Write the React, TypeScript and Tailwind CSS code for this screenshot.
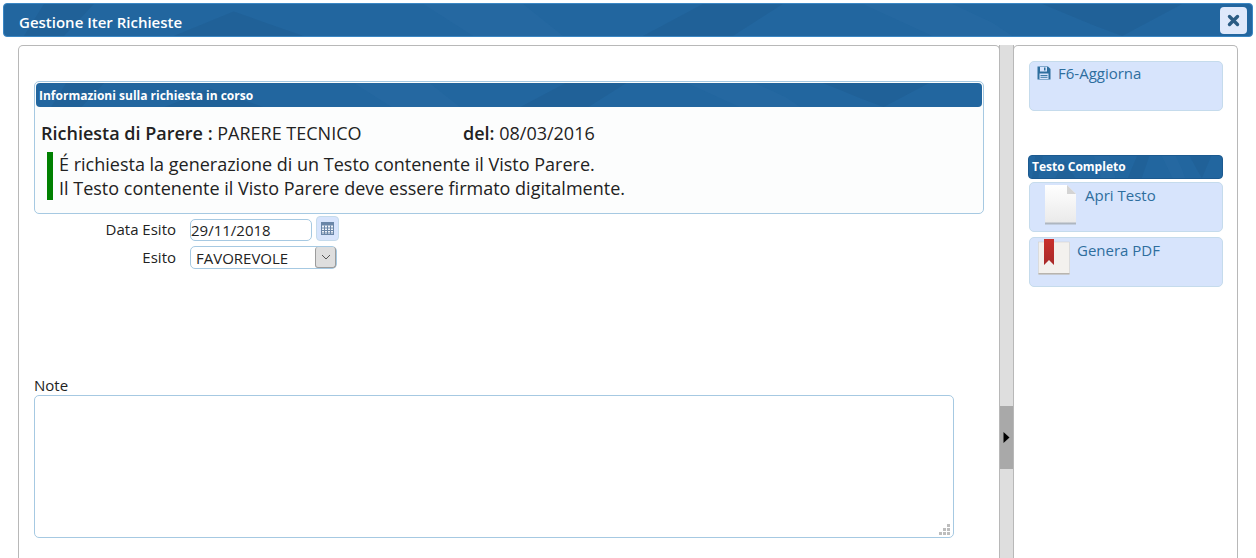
import { ReactNode } from "react";

function Texture() {
	return (
		<svg className="absolute inset-0 h-full w-full" preserveAspectRatio="none" viewBox="0 0 1250 34">
			<path d="M40 0 L90 0 L60 34 L20 34Z M170 34 L230 8 L300 34Z M640 34 L700 0 L780 0 L730 34Z M1040 0 L1180 0 L1120 34 L1090 22Z" fill="#1f5c92" opacity="0.55" />
			<path d="M420 0 L520 0 L560 34 L470 34Z M860 0 L950 0 L990 20 L1010 34 L930 34Z" fill="#2a6ca6" opacity="0.35" />
		</svg>
	);
}

function Bar({ className, children }: { className: string; children: ReactNode }) {
	return (
		<div className={`relative overflow-hidden bg-[#22669f] text-white ${className}`}>
			<Texture />
			<span className="relative">{children}</span>
		</div>
	);
}

function ActionButton({ icon, label, className, labelClass }: { icon: ReactNode; label: string; className: string; labelClass: string }) {
	return (
		<div className={`flex h-[50px] items-start rounded-[5px] border border-[#c5dbec] bg-[#d7e4fc] text-[15px] leading-5 text-[#2e6e9e] ${className}`}>
			{icon}
			<span className={labelClass}>{label}</span>
		</div>
	);
}

export default function App() {
	return (
		<div className="h-[558px] w-[1256px] overflow-hidden bg-white font-['Open_Sans',sans-serif] text-[#222222]">
			<div className="px-[3px] pt-[3px]">
				<div className="relative flex h-[34px] items-center justify-between overflow-hidden rounded-[4px] border border-[#3b87c4] bg-[#22669f] pl-[15px] pr-[5px]">
					<Texture />
					<span className="relative pt-[4px] text-[15px] font-semibold text-white">Gestione Iter Richieste</span>
					<button className="relative flex h-[27px] w-[27px] items-center justify-center rounded-[4px] bg-[#dfe9fb]">
						<svg width="13" height="13" viewBox="0 0 13 13">
							<path d="M2.5 2.5 L10.5 10.5 M10.5 2.5 L2.5 10.5" stroke="#2b5c84" strokeWidth="3.4" strokeLinecap="round" />
						</svg>
					</button>
				</div>
			</div>

			<div className="ml-[18px] mt-2 flex h-[520px] w-[1220px]">
				<div className="h-full w-[982px] rounded-t-[5px] border border-b-0 border-[#b8b8b8] pl-[15px] pt-[35px]">
					<div className="h-[133px] w-[950px] rounded-[5px] border border-[#a6c9e2] bg-[#fcfdfd] p-[1px]">
						<Bar className="flex h-6 items-center rounded-[4px] pl-[3px] pt-[1px] text-[12px] font-bold">Informazioni sulla richiesta in corso</Bar>
						<div className="flex pl-[5px] pt-[15px] text-[18px] leading-[22px]">
							<div className="w-[422px]">
								<span className="font-semibold">Richiesta di Parere : </span>
								PARERE TECNICO
							</div>
							<div>
								<span className="font-semibold">del: </span>
								08/03/2016
							</div>
						</div>
						<div className="ml-[11px] mt-[8px] border-l-[6px] border-[#008000] pl-[6px] text-[18px] leading-6">
							<div>É richiesta la generazione di un Testo contenente il Visto Parere.</div>
							<div>Il Testo contenente il Visto Parere deve essere firmato digitalmente.</div>
						</div>
					</div>

					<div className="mt-[2px] flex h-[25px] items-end">
						<label className="mb-[2px] h-[20px] w-[142px] text-right text-[15px] leading-5">Data Esito</label>
						<div className="ml-[14px] flex h-[22px] w-[122px] items-center rounded-[5px] border border-[#a6c9e2] text-[15px]">29/11/2018</div>
						<div className="ml-1 flex h-[25px] w-[23px] items-center justify-center rounded-[4px] border border-[#c5dbec] bg-[#d7e4fc]">
							<svg width="13" height="13" viewBox="0 0 13 13">
								<rect x="0.5" y="0.5" width="12" height="12" fill="#eef2f9" stroke="#6a86a8" />
								<rect x="0.5" y="0.5" width="12" height="3" fill="#6a86a8" />
								<path d="M0.5 6 H12.5 M0.5 8.5 H12.5 M0.5 11 H12.5 M3.5 3.5 V12.5 M6.5 3.5 V12.5 M9.5 3.5 V12.5" stroke="#6a86a8" strokeWidth="1" />
							</svg>
						</div>
					</div>
					<div className="mt-[5px] flex h-[23px] items-center">
						<label className="w-[142px] text-right text-[15px]">Esito</label>
						<div className="ml-[14px] flex h-[23px] w-[147px] items-center justify-between rounded-[5px] border border-[#a6c9e2] pl-[5px] text-[15px]">
							<span className="pt-[1px]">FAVOREVOLE</span>
							<span className="flex h-[21px] w-[21px] items-center justify-center rounded-[3px] border-x border-b border-[#9c9c9c] bg-[#dedede]">
								<svg width="10" height="6" viewBox="0 0 10 6">
									<path d="M1 1 L5 5 L9 1" fill="none" stroke="#555555" strokeWidth="1" />
								</svg>
							</span>
						</div>
					</div>

					<div className="mt-[106px] text-[15px] leading-[20px]">Note</div>
					<div className="relative h-[143px] w-[920px] rounded-[5px] border border-[#a6c9e2]">
						<svg className="absolute bottom-[1px] right-[2px]" width="12" height="12" viewBox="0 0 12 12">
							<path d="M8 0h3v3H8z M4 4h3v3H4z M8 4h3v3H8z M0 8h3v3H0z M4 8h3v3H4z M8 8h3v3H8z" fill="#bdbdbd" />
						</svg>
					</div>
				</div>

				<div className="-ml-[1px] flex h-full w-[15px] flex-col border-x border-[#b8b8b8] bg-[#dedede]">
					<div className="mt-[361px] flex h-[63px] items-center justify-center bg-[#a9a9a9]">
						<svg width="7" height="11" viewBox="0 0 7 11">
							<path d="M0.5 0 L6.5 5.5 L0.5 11Z" fill="#000000" />
						</svg>
					</div>
				</div>

				<div className="-ml-[1px] h-full w-[225px] rounded-t-[5px] border border-b-0 border-[#b8b8b8] pl-[15px] pr-[14px] pt-[15px]">
					<ActionButton
						className="pl-[7px]"
						label="F6-Aggiorna"
						labelClass="pt-[1px]"
						icon={
							<svg className="mr-[7px] mt-[4px]" width="14" height="14" viewBox="0 0 14 14">
								<path d="M0.5 0.5 H11 L13.5 3 V13.5 H0.5Z" fill="#2e6e9e" />
								<rect x="3" y="1" width="7" height="4.5" fill="#d7e4fc" />
								<rect x="7" y="1.5" width="1.5" height="3" fill="#2e6e9e" />
								<rect x="2.5" y="7.5" width="9" height="5.5" fill="#d7e4fc" />
								<path d="M3.5 9.5 H10.5 M3.5 11.3 H10.5" stroke="#2e6e9e" strokeWidth="0.9" />
							</svg>
						}
					/>
					<Bar className="-ml-[1px] mt-[44px] flex h-6 items-center rounded-[4px] border border-[#1c5a90] pl-[3px] text-[12px] font-bold">Testo Completo</Bar>
					<ActionButton
						className="mt-[3px] pl-[14px]"
						label="Apri Testo"
						labelClass="pt-[2px]"
						icon={
							<svg className="mr-[8px] mt-[2px]" width="33" height="40" viewBox="0 0 33 40">
								<defs>
									<linearGradient id="pageFill" x1="0" y1="0" x2="0" y2="1">
										<stop offset="0" stopColor="#ffffff" />
										<stop offset="1" stopColor="#e9e9e9" />
									</linearGradient>
								</defs>
								<path d="M1 0 H23 L32 9 V39 H1Z" fill="url(#pageFill)" />
								<path d="M23 0 L32 9 H23Z" fill="#d4d4d4" />
								<rect x="1" y="37.5" width="31" height="2" fill="#aeb6c0" />
							</svg>
						}
					/>
					<ActionButton
						className="mt-[5px] pl-[8px]"
						label="Genera PDF"
						labelClass="pt-[2px]"
						icon={
							<svg className="mr-[7px] mt-[1px]" width="32" height="37" viewBox="0 0 32 37">
								<defs>
									<linearGradient id="ribbonFill" x1="0" y1="0" x2="0" y2="1">
										<stop offset="0" stopColor="#c9302c" />
										<stop offset="1" stopColor="#a82a2a" />
									</linearGradient>
								</defs>
								<rect x="0.5" y="3" width="31" height="32" fill="#f3f1ee" stroke="#d0ccc6" strokeWidth="0.5" />
								<rect x="0.5" y="34" width="31" height="1.5" fill="#b8b4ae" />
								<path d="M6 0 H16 V26 L11 21 L6 26Z" fill="url(#ribbonFill)" />
							</svg>
						}
					/>
				</div>
			</div>
		</div>
	);
}
